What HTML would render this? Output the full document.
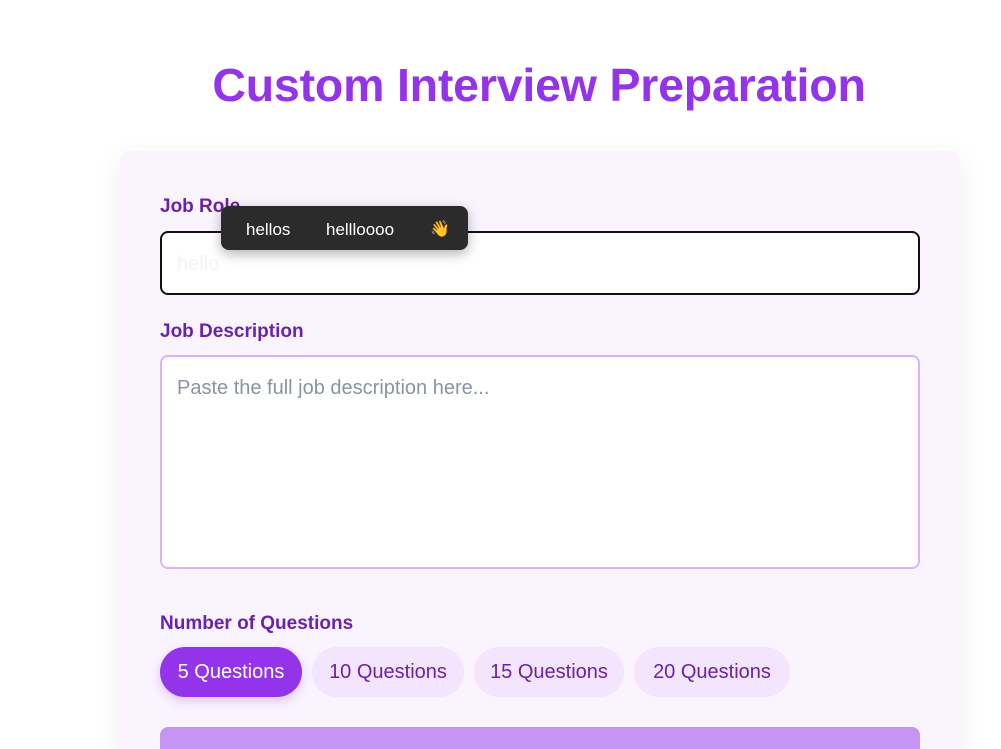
<!DOCTYPE html>
<html style="height:749px;overflow:hidden"><head><style>
body{margin:0;width:1001px;height:749px;overflow:hidden;background:#fff;font-family:"Liberation Sans",sans-serif;position:relative}
h1{position:absolute;left:0;width:1078px;top:58px;margin:0;text-align:center;font-size:46.5px;font-weight:bold;color:#9333ea;letter-spacing:-0.2px}
.card{position:absolute;left:120px;top:151px;width:840px;height:598px;background:#faf4fe;border-radius:8px 8px 0 0;box-shadow:0 10px 30px rgba(0,0,0,0.08)}
.lbl{position:absolute;left:160px;font-size:19px;font-weight:bold;color:#6b21a8}
.inp{position:absolute;left:160px;width:760px;box-sizing:border-box;background:#fff;border-radius:8px}
.pill{position:absolute;top:647px;height:50px;border-radius:25px;background:#f3e5fd;color:#6b21a8;font-size:20px;line-height:50px;text-align:center}
</style></head><body>
<h1>Custom Interview Preparation</h1>
<div class="card"></div>
<div class="lbl" style="top:196px">Job Role</div>
<div class="inp" style="top:231px;height:64px;border:2px solid #111"><span style="position:absolute;left:15px;top:20px;font-size:20px;color:#f4f4f4">hello</span></div>
<div class="lbl" style="top:321px">Job Description</div>
<div class="inp" style="top:355px;height:214px;border:2px solid #d8b4fe"><span style="position:absolute;left:15px;top:20px;font-size:20px;color:#8b93a1">Paste the full job description here...</span></div>
<div class="lbl" style="top:613px">Number of Questions</div>
<div class="pill" style="left:160px;width:142px;background:#9333ea;color:#fff;box-shadow:0 4px 10px rgba(147,51,234,0.25)">5 Questions</div>
<div class="pill" style="left:312px;width:152px">10 Questions</div>
<div class="pill" style="left:474px;width:150px">15 Questions</div>
<div class="pill" style="left:634px;width:156px">20 Questions</div>
<div style="position:absolute;left:160px;top:727px;width:760px;height:22px;background:#c595f3;border-radius:8px 8px 0 0"></div>
<div style="position:absolute;left:221px;top:206px;width:247px;height:44px;background:#2b2b2b;border-radius:8px;box-shadow:0 4px 12px rgba(0,0,0,0.3);color:#fff;font-size:17px;line-height:48px">
<span style="position:absolute;left:25px">hellos</span><span style="position:absolute;left:105px">hellloooo</span><span style="position:absolute;left:209px;font-size:16px">👋</span></div>
</body></html>
